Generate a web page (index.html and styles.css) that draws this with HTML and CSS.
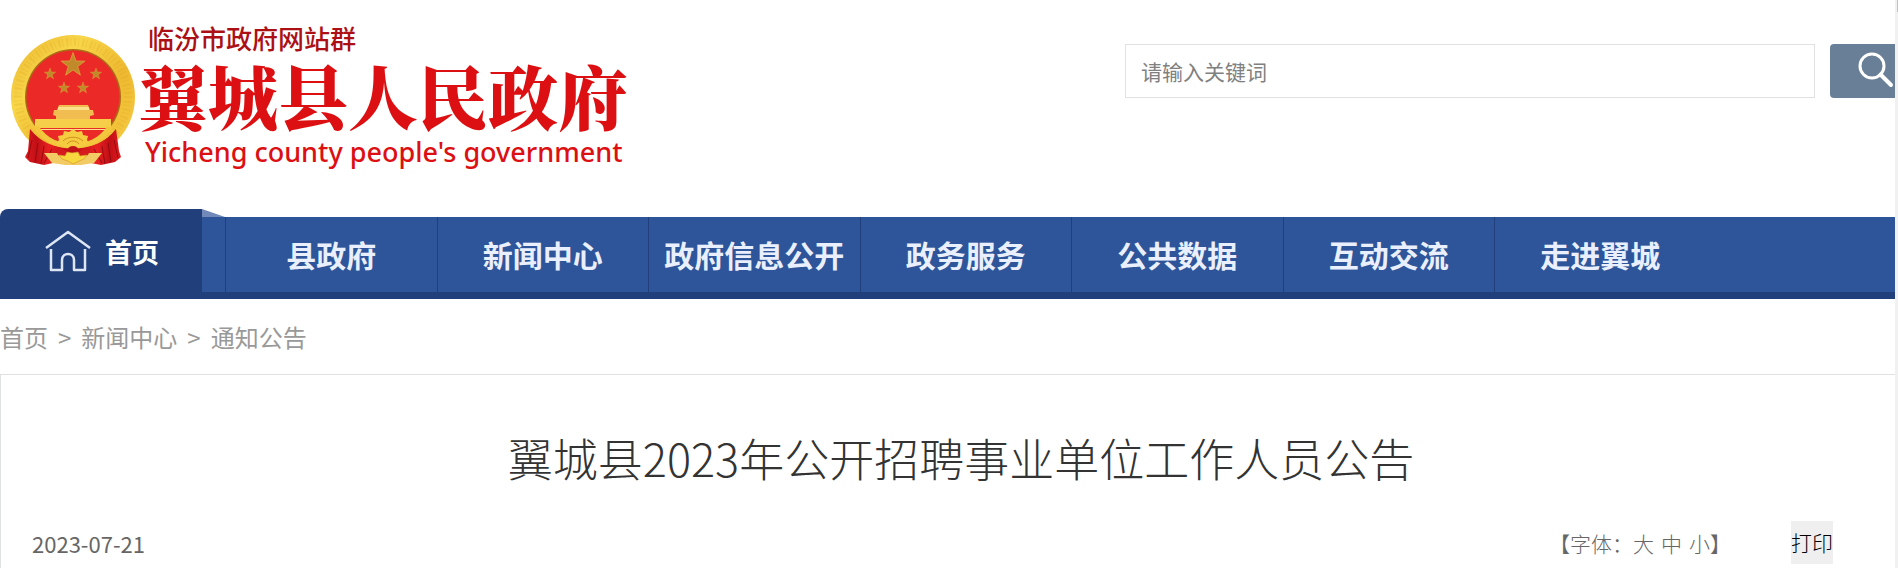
FILE: index.html
```html
<!DOCTYPE html>
<html lang="zh-CN">
<head>
<meta charset="utf-8">
<title>翼城县2023年公开招聘事业单位工作人员公告</title>
<link rel="stylesheet" href="styles.css">
</head>
<body>
<div class="viewport">
<div class="page">
  <header class="header">
    <a class="logo" href="#">
      <svg class="emblem" viewBox="0 0 126 132" aria-hidden="true">
        <defs>
          <linearGradient id="gold" x1="0" y1="0" x2="1" y2="1">
            <stop offset="0" stop-color="#e9b32b"/><stop offset=".3" stop-color="#f8d64a"/>
            <stop offset=".6" stop-color="#eeb930"/><stop offset="1" stop-color="#f7cf45"/>
          </linearGradient>
          <linearGradient id="drape" x1="0" y1="0" x2="1" y2="0">
            <stop offset="0" stop-color="#e01a1e"/><stop offset=".12" stop-color="#c01016"/>
            <stop offset=".25" stop-color="#e82022"/><stop offset=".5" stop-color="#b80e13"/>
            <stop offset=".75" stop-color="#e82022"/><stop offset=".88" stop-color="#c01016"/><stop offset="1" stop-color="#e01a1e"/>
          </linearGradient>
          <path id="star" d="M0-10 2.400-3.200 9.500-3.100 3.800 1.200 5.900 8.100 0 4-5.900 8.100-3.800 1.200-9.500-3.100-2.400-3.200Z"/>
        </defs>
        <circle cx="63" cy="63" r="62" fill="url(#gold)"/>
        <circle cx="63" cy="63" r="55" fill="none" stroke="#d99e22" stroke-width="8" stroke-dasharray="1 3 2 2" opacity=".22"/>
        <circle cx="63" cy="63" r="48" fill="#a86d17"/>
        <circle cx="63" cy="63" r="46.500" fill="#eb2a27"/>
        <g fill="#c08a2a" stroke="#e0aa3c" stroke-width=".6">
          <use href="#star" transform="translate(63 31) scale(1.250)"/>
          <use href="#star" transform="translate(40 40) scale(.6)"/>
          <use href="#star" transform="translate(86 40) scale(.6)"/>
          <use href="#star" transform="translate(54 54) scale(.6)"/>
          <use href="#star" transform="translate(73 54) scale(.6)"/>
        </g>
        <path d="M49 71h29l2 5h3l1 5-4 1v4H46v-4l-3-1 1-5h3Z" fill="#f2bd50"/>
        <path d="M48 73h31v3H48Z" fill="#fbe18a"/>
        <path d="M25 85h76v9H25Z" fill="#f6ce49"/>
        <path d="M29 95h69v1H29Z" fill="#fbe18a"/>
        <path d="M20 95c10 13 24 19 43 19s33-6 43-19l3 22 2 6-6 5-14 3-10-2H43l-9 2-14-3-5-5 3-6Z" fill="url(#drape)"/>
        <path d="M22 106l-4 18M28 109l-3 19M34 112l-3 18M42 115l-8 14M104 106l4 18M98 109l3 19M92 112l3 18M84 115l8 14" fill="none" stroke="#960b10" stroke-width="1"/>
        <path d="M26 93c11 15 22 19 37 19s26-4 37-19" fill="none" stroke="#f4c63e" stroke-width="5"/>
        <path d="M46 110l3-4-1-4 5-1 1-4 5 1 4-3 4 3 5-1 1 4 5 1-1 4 3 4-10 3H56Z" fill="#f5cb3f"/>
        <path d="M34 119h58l-8 10-13 2H55l-13-2Z" fill="#f3cb65"/>
        <path d="M45 114c12 0 14 8 18 8s6-8 18-8l-3 7-9 4H57l-9-4Z" fill="#d61a1d"/>
        <path d="M49 121l6 1 2-4 5 1 6-1 2 4 7-1-3 4-5 2-6 3-5-3-6-2Z" fill="#f8d83f" stroke="#d99a25" stroke-width=".7"/>
        <path d="M53 107c5-5 15-5 20 0M57 110c3-4 9-4 12 0" fill="none" stroke="#d18f20" stroke-width="1"/>
        <ellipse cx="63" cy="115" rx="5" ry="3" fill="#c01217"/>
      </svg>
      <span class="logo-text">
        <span class="logo-group">临汾市政府网站群</span>
        <span class="logo-name">翼城县人民政府</span>
        <span class="logo-en">Yicheng county people's government</span>
      </span>
    </a>
    <form class="search" onsubmit="return false">
      <input class="search-input" type="text" placeholder="请输入关键词" aria-label="请输入关键词">
      <button class="search-button" type="submit" aria-label="搜索">
        <svg class="search-icon" viewBox="0 0 36 36" aria-hidden="true"><circle cx="14" cy="14" r="12" fill="none" stroke="#fff" stroke-width="3"/><path d="M22.500 22.500 33 33" stroke="#fff" stroke-width="4" stroke-linecap="round"/></svg>
      </button>
    </form>
  </header>

  <nav class="nav">
    <a class="nav-home" href="#">
      <svg class="home-icon" viewBox="0 0 46 42" aria-hidden="true"><path d="M1 18 23 2l22 16M6 19v21h11V30c0-8 12-8 12 0v10h11V19" fill="none" stroke="#dfe6f3" stroke-width="2.500" stroke-linejoin="round"/></svg>
      首页
    </a>
    <span class="nav-fold"></span>
    <a class="nav-item" href="#">县政府</a>
    <a class="nav-item" href="#">新闻中心</a>
    <a class="nav-item" href="#">政府信息公开</a>
    <a class="nav-item" href="#">政务服务</a>
    <a class="nav-item" href="#">公共数据</a>
    <a class="nav-item" href="#">互动交流</a>
    <a class="nav-item" href="#">走进翼城</a>
  </nav>

  <div class="breadcrumb">
    <a href="#">首页</a><span>&gt;</span><a href="#">新闻中心</a><span>&gt;</span><a href="#">通知公告</a>
  </div>

  <main class="article">
    <h1 class="title">翼城县2023年公开招聘事业单位工作人员公告</h1>
    <div class="meta">
      <time class="date">2023-07-21</time>
      <div class="font-size">【字体：<span class="sizes"><a href="#">大</a><a href="#">中</a><a href="#">小</a></span>】</div>
      <button class="print" type="button">打印</button>
    </div>
  </main>
</div>
<div class="scrollbar"><div class="scrollbar-thumb"></div></div>
</div>
</body>
</html>
```
FILE: styles.css
```css
* { box-sizing: border-box; }

body {
  margin: 0;
  background: #fff;
  font-family: "Noto Sans CJK SC", sans-serif;
  font-size: 21px;
  color: #666;
}

a { color: inherit; text-decoration: none; }

.viewport {
  position: relative;
  min-height: 100vh;
  overflow: hidden;
}

/* The page is slightly wider than the window and runs under its right edge. */
.page { width: calc(100% + 25px); }

.header {
  display: flex;
  justify-content: space-between;
  align-items: flex-start;
  height: 209px;
  padding-right: 3px;
}

.logo {
  display: flex;
  align-items: flex-start;
  padding: 20px 0 0 10px;
  white-space: nowrap;
}

.emblem { width: 126px; height: 132px; margin-top: 14px; }

.logo-text { display: flex; flex-direction: column; color: #dc1012; }

.logo-group {
  padding-left: 12px;
  font-size: 26px;
  font-weight: 500;
  line-height: 36px;
  color: #ac1015;
}

.logo-name {
  padding-left: 2px;
  font-family: "Noto Serif CJK SC", "Noto Sans CJK SC", serif;
  font-size: 70px;
  font-weight: 900;
  line-height: 78px;
}

.logo-en {
  padding-left: 9px;
  font-family: "Noto Sans", sans-serif;
  font-size: 27px;
  font-weight: 500;
  line-height: 36px;
}

.search { display: flex; gap: 15px; padding-top: 44px; }

.search-input {
  width: 690px;
  height: 54px;
  padding: 0 15px;
  border: 1px solid #e0e2e2;
  background: #fff;
  font: 400 21px "Noto Sans CJK SC", sans-serif;
  color: #333;
}

.search-input::placeholder { color: #808080; opacity: 1; }

.search-button {
  display: flex;
  align-items: center;
  justify-content: center;
  width: 90px;
  height: 54px;
  padding: 0 0 2px 2px;
  border: 0;
  border-radius: 4px;
  background: #687f97;
}

.search-icon { width: 36px; height: 36px; }

.nav {
  display: flex;
  align-items: flex-end;
  height: 90px;
  background: linear-gradient(#fff 8px, #2e5499 8px, #2e5499 83px, #203f7b 83px);
  font-weight: 700;
  color: #e9effc;
}

.nav-home {
  display: flex;
  align-items: center;
  gap: 14px;
  width: 202px;
  height: 90px;
  padding: 0 0 6px 45px;
  border-radius: 8px 0 0;
  background: #203f7b;
  font-size: 27px;
  color: #fff;
}

.home-icon { width: 46px; height: 42px; }

.nav-fold {
  align-self: flex-start;
  width: 23px;
  height: 8px;
  background: #7189b8;
  clip-path: polygon(0 0, 100% 100%, 0 100%);
}

.nav-item {
  width: 11%;
  height: 75px;
  margin-bottom: 7px;
  border-left: 1px solid #203f7b;
  font-size: 30px;
  line-height: 74px;
  text-align: center;
  white-space: nowrap;
}

.breadcrumb {
  display: flex;
  gap: 10px;
  height: 75px;
  font-size: 24px;
  line-height: 75px;
  color: #999;
}

.article {
  min-height: calc(100vh - 374px);
  padding: 50px 32px 24px 31px;
  border: 1px solid #e0e2e2;
  border-bottom: 0;
}

.title {
  margin: 0;
  font-size: 45px;
  font-weight: 300;
  line-height: 66px;
  text-align: center;
  color: #333;
}

.meta {
  display: flex;
  align-items: center;
  margin-top: 30px;
  padding-right: 57px;
}

.date {
  margin-right: auto;
  font-size: 22px;
  line-height: 40px;
}

.font-size { font-weight: 300; line-height: 40px; }

.sizes { display: inline-flex; gap: 7px; }

.print {
  margin-left: 60px;
  padding: 0;
  border: 0;
  background: #efefef;
  font: 300 21px/43px "Noto Sans CJK SC", sans-serif;
  color: #000;
}

/* Window scrollbar, lying over the page's right edge. */
.scrollbar {
  position: absolute;
  top: 0;
  right: 0;
  width: 3px;
  height: 100%;
  background: #f1f1f1;
}

.scrollbar-thumb { width: 1px; height: 12px; margin-left: auto; background: #c1c1c1; }
```
